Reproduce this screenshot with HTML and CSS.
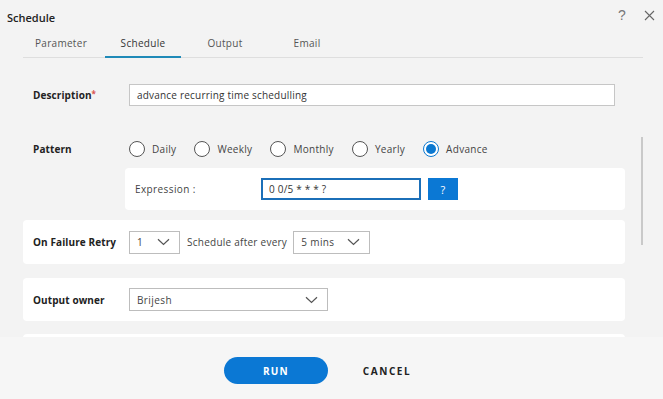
FILE: index.html
```html
<!DOCTYPE html>
<html>
<head>
<meta charset="utf-8">
<link rel="stylesheet" href="styles.css">
</head>
<body>
<div class="modal">
  <header class="titlebar">
    <div class="title">Schedule</div>
    <div class="tools">
      <span class="help">?</span>
      <svg class="close" width="11" height="11" viewBox="0 0 11 11"><path d="M1 1L10 10M10 1L1 10" stroke="#666" stroke-width="1.1" fill="none"/></svg>
    </div>
  </header>
  <nav class="tabs">
    <div class="tab">Parameter</div>
    <div class="tab active">Schedule</div>
    <div class="tab">Output</div>
    <div class="tab">Email</div>
  </nav>
  <main class="content">
    <div class="row desc-row">
      <div class="label">Description<span class="req">*</span></div>
      <div class="textbox desc-input">advance recurring time schedulling</div>
    </div>
    <div class="row pattern-row">
      <div class="label">Pattern</div>
      <div class="radios">
        <div class="radio"><span class="circle"></span><span>Daily</span></div>
        <div class="radio"><span class="circle"></span><span>Weekly</span></div>
        <div class="radio"><span class="circle"></span><span>Monthly</span></div>
        <div class="radio"><span class="circle"></span><span>Yearly</span></div>
        <div class="radio checked"><span class="circle"></span><span>Advance</span></div>
      </div>
    </div>
    <div class="expr-panel">
      <div class="expr-label">Expression :</div>
      <div class="textbox expr-input">0 0/5 * * * ?</div>
      <div class="qbtn">?</div>
    </div>
    <div class="panel retry-panel">
      <div class="label">On Failure Retry</div>
      <div class="select sel-retry"><span>1</span><svg width="13" height="8" viewBox="0 0 13 8"><path d="M1 1.2L6.5 6.5L12 1.2" stroke="#555" stroke-width="1.2" fill="none"/></svg></div>
      <div class="after-text">Schedule after every</div>
      <div class="select sel-mins"><span>5 mins</span><svg width="13" height="8" viewBox="0 0 13 8"><path d="M1 1.2L6.5 6.5L12 1.2" stroke="#555" stroke-width="1.2" fill="none"/></svg></div>
    </div>
    <div class="panel owner-panel">
      <div class="label">Output owner</div>
      <div class="select sel-owner"><span>Brijesh</span><svg width="13" height="8" viewBox="0 0 13 8"><path d="M1 1.2L6.5 6.5L12 1.2" stroke="#555" stroke-width="1.2" fill="none"/></svg></div>
    </div>
    <div class="panel next-panel"></div>
    <div class="scrollbar"></div>
  </main>
  <footer class="footer">
    <div class="btn run">RUN</div>
    <div class="btn cancel">CANCEL</div>
  </footer>
</div>
</body>
</html>
```
FILE: styles.css
```css
html, body {
  margin: 0;
  padding: 0;
}
body {
  background: #f3f3f3;
  font-family: "Open Sans", "Noto Sans", sans-serif;
  color: #333;
  font-size: 10px;
  letter-spacing: 0.2px;
}
.modal {
  height: 399px;
  display: flex;
  flex-direction: column;
  overflow: hidden;
}
.titlebar {
  height: 32px;
  flex: none;
  display: flex;
  align-items: center;
  justify-content: space-between;
  padding: 2px 8px 0 7px;
  box-sizing: border-box;
}
.title {
  font-size: 11px;
  font-weight: 600;
  color: #222;
  letter-spacing: 0;
}
.tools {
  display: flex;
  align-items: center;
  gap: 18px;
  margin-top: -4px;
}
.help {
  font-family: "Liberation Sans", sans-serif;
  font-size: 14px;
  color: #777;
  font-weight: 300;
}
.tabs {
  flex: none;
  display: flex;
  gap: 6px;
  height: 26px;
  box-sizing: border-box;
  margin: 0 20px 0 23px;
  border-bottom: 1px solid #dedede;
}
.tab {
  width: 76px;
  height: 26px;
  box-sizing: border-box;
  margin-bottom: -1px;
  border-bottom: 2px solid transparent;
  text-align: center;
  line-height: 22px;
  color: #555;
  font-size: 10px;
  letter-spacing: 0.3px;
}
.tab.active {
  border-bottom-color: #1f8ab8;
  color: #333;
}
.content {
  flex: 1;
  position: relative;
  overflow: hidden;
  padding: 0 38px 0 23px;
  display: flex;
  flex-direction: column;
}
.row {
  display: flex;
  align-items: center;
}
.label {
  width: 96px;
  padding-left: 10px;
  flex: none;
  font-weight: 700;
  color: #222;
  font-size: 10px;
  letter-spacing: 0.1px;
}
.req {
  color: #d9534f;
  font-size: 8px;
  vertical-align: 2px;
}
.textbox {
  background: #fff;
  box-sizing: border-box;
  display: flex;
  align-items: center;
  color: #333;
}
.desc-row {
  margin-top: 26px;
  height: 22px;
}
.desc-input {
  width: 486px;
  height: 22px;
  border: 1px solid #c6c6c6;
  padding-left: 7px;
}
.pattern-row {
  margin-top: 35px;
  height: 16px;
}
.radios {
  display: flex;
  gap: 18px;
}
.radio {
  display: flex;
  align-items: center;
  gap: 7px;
  color: #444;
  letter-spacing: 0.3px;
}
.circle {
  width: 16px;
  height: 16px;
  box-sizing: border-box;
  border: 1px solid #555;
  border-radius: 50%;
  background: #fff;
  display: flex;
  align-items: center;
  justify-content: center;
}
.radio.checked .circle {
  border-color: #0b78d0;
}
.radio.checked .circle::after {
  content: "";
  width: 10px;
  height: 10px;
  border-radius: 50%;
  background: #0b78d0;
}
.expr-panel {
  margin-top: 11px;
  margin-left: 102px;
  height: 42px;
  background: #fff;
  border-radius: 4px;
  display: flex;
  align-items: center;
  padding-left: 10px;
  flex: none;
}
.expr-label {
  width: 126px;
  color: #444;
  letter-spacing: 0.4px;
}
.expr-input {
  width: 160px;
  height: 22px;
  border: 2px solid #1b6fb8;
  padding-left: 6px;
}
.qbtn {
  margin-left: 7px;
  width: 30px;
  height: 22px;
  background: #0b78d4;
  color: #fff;
  display: flex;
  align-items: center;
  justify-content: center;
  font-size: 11px;
}
.panel {
  background: #fff;
  border-radius: 4px;
  display: flex;
  align-items: center;
  flex: none;
}
.retry-panel {
  margin-top: 10px;
  height: 44px;
}
.owner-panel {
  margin-top: 14px;
  height: 43px;
}
.next-panel {
  margin-top: 13px;
  height: 40px;
}
.select {
  height: 23px;
  box-sizing: border-box;
  border: 1px solid #bdbdbd;
  background: #fff;
  display: flex;
  align-items: center;
  justify-content: space-between;
  padding: 0 9px 0 7px;
  color: #444;
  letter-spacing: 0.4px;
}
.sel-retry { width: 51px; }
.sel-mins { width: 77px; }
.sel-owner { width: 199px; }
.after-text {
  margin: 0 6px 0 7px;
  color: #444;
  letter-spacing: 0.25px;
}
.scrollbar {
  position: absolute;
  left: 641px;
  top: 79px;
  width: 2px;
  height: 108px;
  background: #c9c9c9;
}
.footer {
  height: 62px;
  flex: none;
  background: #f6f6f6;
  display: flex;
  justify-content: center;
  align-items: center;
  gap: 7px;
  padding-top: 5px;
  box-sizing: border-box;
}
.btn {
  width: 104px;
  height: 27px;
  border-radius: 14px;
  display: flex;
  align-items: center;
  justify-content: center;
  font-weight: 700;
  font-size: 10px;
  letter-spacing: 1.2px;
}
.run {
  background: #0b78d4;
  color: #fff;
}
.cancel {
  color: #222;
  letter-spacing: 1.6px;
}
```
